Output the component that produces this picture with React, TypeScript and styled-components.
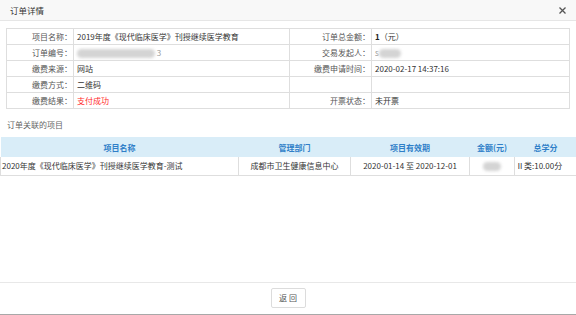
import React from "react";
import styled, { createGlobalStyle } from "styled-components";

const Global = createGlobalStyle`
  html, body { margin: 0; padding: 0; background: #fff; }
  body { font-family: "Noto Sans CJK SC", "Noto Sans", sans-serif; }
  * { box-sizing: border-box; }
`;

const Dialog = styled.div`
  width: 576px;
  height: 315px;
  display: flex;
  flex-direction: column;
  background: #fff;
  border-bottom: 1px solid #a8a8a8;
  overflow: hidden;
`;

const Header = styled.div`
  height: 21px;
  flex: none;
  display: flex;
  align-items: center;
  justify-content: space-between;
  padding: 0 10px 0 10px;
  background: #f8f8f8;
  border-bottom: 1px solid #e6e6e6;
  font-size: 8.5px;
  color: #333;
`;

const Close = styled.button`
  border: 0;
  background: none;
  padding: 0;
  width: 8px;
  height: 8px;
  display: flex;
  align-items: center;
  justify-content: center;
  cursor: pointer;
`;

const Body = styled.div`
  flex: 1;
  display: flex;
  flex-direction: column;
  padding-top: 7px;
`;

const InfoTable = styled.table`
  margin: 0 7px 0 6px;
  width: 563px;
  border-collapse: collapse;
  table-layout: fixed;
  font-size: 8px;
  td {
    border: 1px solid #dedede;
    height: 16px;
    padding: 0 3px;
    white-space: nowrap;
    overflow: hidden;
  }
`;

const Label = styled.td`
  text-align: right;
  color: #555;
  && { padding-right: 1px; }
`;

const Value = styled.td<{ $tone?: "red" }>`
  color: ${(p) => (p.$tone === "red" ? "#ff2a2a" : "#333")};
`;

const Strong = styled.b`
  font-weight: 700;
  color: #222;
`;

const Blur = styled.span<{ $w: number }>`
  display: inline-block;
  vertical-align: middle;
  width: ${(p) => p.$w}px;
  height: 9px;
  border-radius: 5px;
  background: #d4d4d4;
  filter: blur(1.6px);
`;

const Faint = styled.span`
  color: #999;
`;

const SectionTitle = styled.div`
  margin: 11px 0 0 7px;
  height: 10px;
  line-height: 10px;
  font-size: 8px;
  color: #666;
`;

const ItemTable = styled.table`
  margin-top: 7px;
  width: 576px;
  border-collapse: collapse;
  table-layout: fixed;
  font-size: 8px;
  th {
    height: 20px;
    background: #d9edf8;
    color: #2f7fc8;
    font-weight: 700;
    text-align: center;
    padding: 0;
    white-space: nowrap;
  }
  td {
    height: 18px;
    border: 1px solid #dedede;
    border-top: 0;
    color: #333;
    padding: 0 1px;
    white-space: nowrap;
    overflow: hidden;
  }
`;

const Cell = styled.td<{ $align?: "left" | "center" }>`
  text-align: ${(p) => p.$align ?? "center"};
`;

const Footer = styled.div`
  height: 32px;
  flex: none;
  border-top: 1px solid #e8e8e8;
  display: flex;
  align-items: center;
  justify-content: center;
  padding-bottom: 4px;
`;

const Button = styled.button`
  width: 35px;
  height: 20px;
  padding: 0;
  border: 1px solid #dcdcdc;
  border-radius: 2px;
  background: #fff;
  font-family: inherit;
  font-size: 8px;
  color: #555;
  letter-spacing: 2px;
  text-indent: 2px;
  margin-top: 2px;
`;

export default function App() {
  return (
    <>
      <Global />
      <Dialog>
        <Header>
          <span>订单详情</span>
          <Close aria-label="关闭">
            <svg width="7" height="7" viewBox="0 0 7 7">
              <path d="M0.5 0.5 L6.5 6.5 M6.5 0.5 L0.5 6.5" stroke="#555" strokeWidth="1.3" />
            </svg>
          </Close>
        </Header>
        <Body>
          <InfoTable>
            <colgroup>
              <col style={{ width: 67 }} />
              <col style={{ width: 216 }} />
              <col style={{ width: 82 }} />
              <col style={{ width: 198 }} />
            </colgroup>
            <tbody>
              <tr>
                <Label>项目名称：</Label>
                <Value>2019年度《现代临床医学》刊授继续医学教育</Value>
                <Label>订单总金额：</Label>
                <Value>
                  <Strong>1</Strong>（元）
                </Value>
              </tr>
              <tr>
                <Label>订单编号：</Label>
                <Value>
                  <Blur $w={78} /> <Faint>3</Faint>
                </Value>
                <Label>交易发起人：</Label>
                <Value>
                  <Faint>s</Faint>
                  <Blur $w={22} />
                </Value>
              </tr>
              <tr>
                <Label>缴费来源：</Label>
                <Value>网站</Value>
                <Label>缴费申请时间：</Label>
                <Value>2020-02-17 14:37:16</Value>
              </tr>
              <tr>
                <Label>缴费方式：</Label>
                <Value>二维码</Value>
                <Label></Label>
                <Value></Value>
              </tr>
              <tr>
                <Label>缴费结果：</Label>
                <Value $tone="red">支付成功</Value>
                <Label>开票状态：</Label>
                <Value>未开票</Value>
              </tr>
            </tbody>
          </InfoTable>
          <SectionTitle>订单关联的项目</SectionTitle>
          <ItemTable>
            <colgroup>
              <col style={{ width: 238 }} />
              <col style={{ width: 112 }} />
              <col style={{ width: 119 }} />
              <col style={{ width: 45 }} />
              <col style={{ width: 62 }} />
            </colgroup>
            <thead>
              <tr>
                <th>项目名称</th>
                <th>管理部门</th>
                <th>项目有效期</th>
                <th>金额(元)</th>
                <th>总学分</th>
              </tr>
            </thead>
            <tbody>
              <tr>
                <Cell $align="left">2020年度《现代临床医学》刊授继续医学教育-测试</Cell>
                <Cell>成都市卫生健康信息中心</Cell>
                <Cell>2020-01-14 至 2020-12-01</Cell>
                <Cell>
                  <Blur $w={18} />
                </Cell>
                <Cell $align="left">Ⅱ类:10.00分</Cell>
              </tr>
            </tbody>
          </ItemTable>
        </Body>
        <Footer>
          <Button>返回</Button>
        </Footer>
      </Dialog>
    </>
  );
}
